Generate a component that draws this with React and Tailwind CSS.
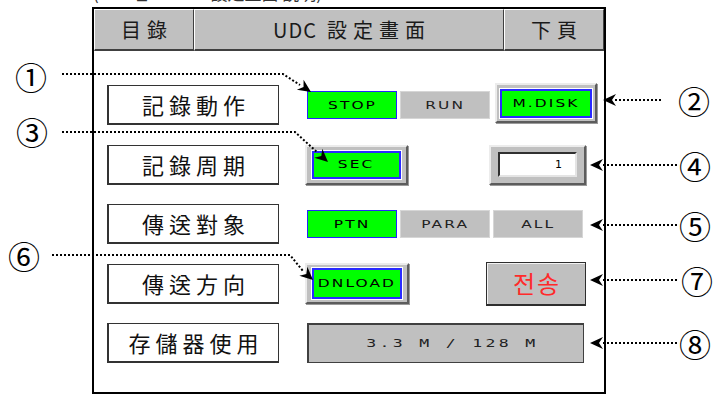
import React from 'react'

const cjk = "font-['Noto_Sans_CJK_KR','Noto_Sans_CJK_TC',sans-serif]"
const small = "font-['DejaVu_Sans',sans-serif] text-[11px] leading-none"

function Tag({ children, mono }) {
  return (
    <span className={`inline-block ${mono ? "scale-x-150 font-['DejaVu_Sans_Mono',monospace] tracking-[2.2px] whitespace-pre" : 'scale-x-[1.4] tracking-[1.5px]'}`}>
      {children}
    </span>
  )
}

function Label({ children }) {
  return (
    <div className="w-[172px] h-[40px] shrink-0 bg-white border border-[#333] border-l-2 border-b-2 flex items-center justify-center pl-[5px] text-[22px] tracking-[5px] text-[#111]">
      {children}
    </div>
  )
}

function FlatOn({ children }) {
  return (
    <div className={`w-[90px] h-[28px] bg-[#00ff00] border border-[#2424ff] flex items-center justify-center text-black ${small}`}>
      <Tag>{children}</Tag>
    </div>
  )
}

function FlatOff({ children }) {
  return (
    <div className={`w-[90px] h-[28px] bg-[#c0c0c0] border border-[#d6d6d6] flex items-center justify-center text-[#222] ${small}`}>
      <Tag>{children}</Tag>
    </div>
  )
}

function Raised({ className = '', children }) {
  return (
    <div className={`bg-[#c0c0c0] border-2 border-t-[#ececec] border-l-[#ececec] border-r-[#5c5c5c] border-b-[#5c5c5c] shadow-[1px_1px_0_#9a9a9a] ${className}`}>
      {children}
    </div>
  )
}

function GreenKey({ children }) {
  return (
    <div className={`w-full h-full bg-[#00ff00] border-2 border-[#2a2aff] outline outline-white flex items-center justify-center text-black ${small}`}>
      <Tag>{children}</Tag>
    </div>
  )
}

export default function App() {
  return (
    <div className={`relative w-[716px] h-[394px] bg-white overflow-hidden ${cjk}`}>
      <div className="ml-[93px] h-[7px] overflow-hidden flex items-end">
        <div className="text-[17px] leading-[28px] text-[#333] whitespace-pre">{'(     그림      UDC 設定畫面 說明)'}</div>
      </div>

      <div className="ml-[92px] w-[514px] h-[387px] border-2 border-black flex flex-col">
        <div className="flex h-[42px] text-[20px] text-[#1a1a1a]">
          <div className="w-[100px] bg-[#c0c0c0] border border-b-2 border-t-white border-l-white border-r-[#404040] border-b-[#404040] flex items-center justify-center pl-[6px] tracking-[6px]">目錄</div>
          <div className="flex-1 bg-[#c0c0c0] border border-b-2 border-t-white border-l-white border-r-[#404040] border-b-[#404040] flex items-center justify-center pl-[6px] tracking-[6px]">
            <span className="tracking-[1px] mr-[10px]">UDC</span>設定畫面
          </div>
          <div className="w-[100px] bg-[#c0c0c0] border border-b-2 border-t-white border-l-white border-r-[#404040] border-b-[#404040] flex items-center justify-center pl-[6px] tracking-[6px]">下頁</div>
        </div>

        <div className="flex flex-col gap-[19.5px] pt-[34px] pl-[13px]">
          <div className="flex items-center h-[40px]">
            <Label>記錄動作</Label>
            <div className="ml-[28px] flex items-center">
              <FlatOn>STOP</FlatOn>
              <div className="ml-[3px]"><FlatOff>RUN</FlatOff></div>
              <Raised className="ml-[5px] -mt-[4px] w-[102px] h-[40px] pt-[4px] pb-[3px] px-[3px]">
                <GreenKey>M.DISK</GreenKey>
              </Raised>
            </div>
          </div>

          <div className="flex items-center h-[40px]">
            <Label>記錄周期</Label>
            <Raised className="ml-[26px] w-[103px] h-[40px] pt-[4px] pb-[4px] px-[5px]">
              <GreenKey>SEC</GreenKey>
            </Raised>
            <Raised className="ml-[81px] w-[97px] h-[40px] pt-[5px] pb-[6px] px-[7px]">
              <div className={`w-full h-full bg-white border-2 border-t-[#303030] border-l-[#303030] border-r-[#e4e4e4] border-b-[#e4e4e4] flex items-center justify-end pr-[13px] text-black ${small}`}>
                1
              </div>
            </Raised>
          </div>

          <div className="flex items-center h-[40px]">
            <Label>傳送對象</Label>
            <div className="ml-[28px] flex items-center gap-[3px]">
              <FlatOn>PTN</FlatOn>
              <FlatOff>PARA</FlatOff>
              <FlatOff>ALL</FlatOff>
            </div>
          </div>

          <div className="flex items-center h-[40px]">
            <Label>傳送方向</Label>
            <Raised className="ml-[26px] w-[104px] h-[41px] pt-[3px] pb-[3px] px-[5px]">
              <GreenKey>DNLOAD</GreenKey>
            </Raised>
            <div className="ml-[77px] w-[100px] h-[44px] bg-[#c0c0c0] border border-[#2e2e2e] border-b-2 shadow-[inset_1px_1px_0_#f2f2f2] flex items-center justify-center pl-[2px] text-[24px] tracking-[2px] text-[#ff2a2a]">
              전송
            </div>
          </div>

          <div className="flex items-center h-[40px]">
            <Label>存儲器使用</Label>
            <div className={`ml-[28px] w-[277px] h-[40px] bg-[#c0c0c0] border border-t-2 border-l-2 border-[#404040] flex items-center justify-center pl-[12px] text-[#222] ${small}`}>
              <Tag mono>3.3 M / 128 M</Tag>
            </div>
          </div>
        </div>
      </div>

      <svg className="absolute inset-0 pointer-events-none" width="716" height="394">
        <g fill="none" stroke="#000" strokeWidth="2" strokeDasharray="2 2">
          <path d="M62 74 H283 L300 85" />
          <path d="M62 132 H295 L318 153" />
          <path d="M52 255 H290 L303 271" />
          <path d="M615 100 H662" />
          <path d="M603 165 H677" />
          <path d="M603 225 H677" />
          <path d="M603 280 H677" />
          <path d="M603 343 H677" />
        </g>
        <g fill="#000">
          <path transform="translate(311 92) rotate(34)" d="M0 0 L-13 -6 L-9 0 L-13 6 Z" />
          <path transform="translate(328 162) rotate(42)" d="M0 0 L-13 -6 L-9 0 L-13 6 Z" />
          <path transform="translate(313 280) rotate(42)" d="M0 0 L-13 -6 L-9 0 L-13 6 Z" />
          <path transform="translate(603 100) rotate(180)" d="M0 0 L-13 -6 L-9 0 L-13 6 Z" />
          <path transform="translate(590 165) rotate(180)" d="M0 0 L-13 -6 L-9 0 L-13 6 Z" />
          <path transform="translate(590 225) rotate(180)" d="M0 0 L-13 -6 L-9 0 L-13 6 Z" />
          <path transform="translate(590 280) rotate(180)" d="M0 0 L-13 -6 L-9 0 L-13 6 Z" />
          <path transform="translate(590 343) rotate(180)" d="M0 0 L-13 -6 L-9 0 L-13 6 Z" />
        </g>
      </svg>

      <div className="absolute left-[13px] top-[58px] w-[36px] h-[36px] flex items-center justify-center text-[32px] leading-none text-black">①</div>
      <div className="absolute left-[14px] top-[113px] w-[36px] h-[36px] flex items-center justify-center text-[32px] leading-none text-black">③</div>
      <div className="absolute left-[6px] top-[237px] w-[36px] h-[36px] flex items-center justify-center text-[32px] leading-none text-black">⑥</div>
      <div className="absolute left-[676px] top-[82px] w-[36px] h-[36px] flex items-center justify-center text-[32px] leading-none text-black">②</div>
      <div className="absolute left-[677px] top-[147px] w-[36px] h-[36px] flex items-center justify-center text-[32px] leading-none text-black">④</div>
      <div className="absolute left-[677px] top-[207px] w-[36px] h-[36px] flex items-center justify-center text-[32px] leading-none text-black">⑤</div>
      <div className="absolute left-[679px] top-[262px] w-[36px] h-[36px] flex items-center justify-center text-[32px] leading-none text-black">⑦</div>
      <div className="absolute left-[677px] top-[325px] w-[36px] h-[36px] flex items-center justify-center text-[32px] leading-none text-black">⑧</div>
    </div>
  )
}
